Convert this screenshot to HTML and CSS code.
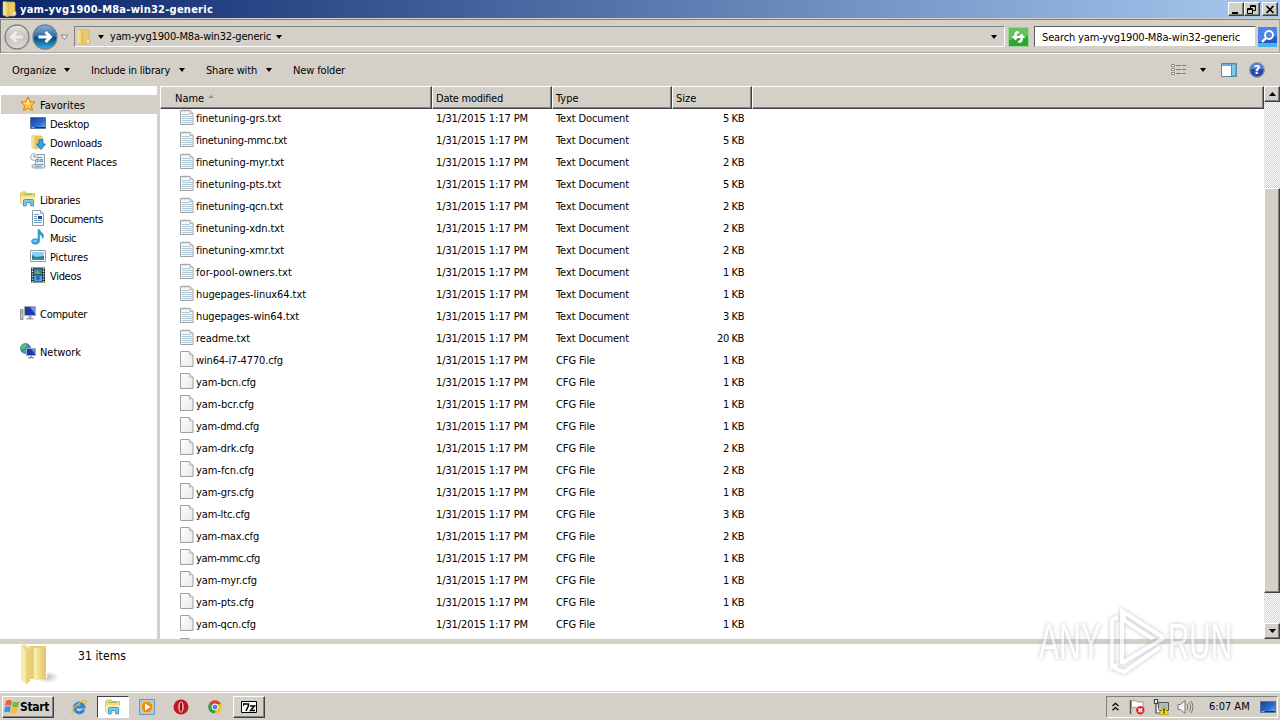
FILE: index.html
```html
<!DOCTYPE html>
<html lang="en">
<head>
    <meta charset="UTF-8">
    <title>yam-yvg1900-M8a-win32-generic</title>
    <link rel="stylesheet" href="styles.css">
</head>
<body>
    <!-- Shared icons -->
    <svg class="defs" width="0" height="0">
        <defs>
            <linearGradient id="gFolder" x1="0" x2="1"><stop offset="0" stop-color="#fbf0b4"/><stop offset="1" stop-color="#dfba50"/></linearGradient>
            <linearGradient id="gPage" x1="0" y1="0" x2="1" y2="1"><stop offset="0" stop-color="#fff"/><stop offset="1" stop-color="#e8e8e8"/></linearGradient>
            <linearGradient id="gScreen" x1="0" y1="0" x2="1" y2="1"><stop offset="0" stop-color="#1c3c9c"/><stop offset=".6" stop-color="#2f6cd0"/><stop offset="1" stop-color="#7fc0f0"/></linearGradient>
            <linearGradient id="gBlue" x1="0" y1="0" x2="0" y2="1"><stop offset="0" stop-color="#8cb4d4"/><stop offset=".48" stop-color="#2e6a9c"/><stop offset=".5" stop-color="#06417c"/><stop offset="1" stop-color="#28b4e8"/></linearGradient>
            <linearGradient id="gGrey" x1="0" y1="0" x2="0" y2="1"><stop offset="0" stop-color="#e8e6e2"/><stop offset=".5" stop-color="#c4c1bc"/><stop offset="1" stop-color="#dedcd8"/></linearGradient>
        </defs>
        <symbol id="folder" viewBox="0 0 16 16">
            <path d="M5 1h8l1 1v8l1 1v3l-2 1H5z" fill="#e8ca68" stroke="#d0ae50" stroke-width=".6"/>
            <path d="M2 1l2-.6L8 2v13l-2 .7L2 14z" fill="url(#gFolder)" stroke="#d8bd60" stroke-width=".6"/>
            <path d="M13 11v3" stroke="#fff" stroke-width="1.2"/>
        </symbol>
        <symbol id="page" viewBox="0 0 14 16">
            <path d="M.5.5h9l3.500 3.500v11.500H.5z" fill="url(#gPage)" stroke="#a0a0a0"/>
            <path d="M9.500.5V4H13" fill="#e4e4e4" stroke="#a8a8a8" stroke-width=".8"/>
        </symbol>
        <symbol id="text" viewBox="0 0 14 16">
            <path d="M.5 1.500h9.500l3 3v11H.5z" fill="#f4f8fa" stroke="#a0a0a0"/>
            <path d="M2 .5v2M4 .5v2M6 .5v2M8 .5v2" stroke="#b0b0b0"/>
            <path d="M10 1.500v3h3" fill="#ddd" stroke="#a8a8a8" stroke-width=".8"/>
            <path d="M2 5.500h8M2 7.500h10M2 9.500h10M2 11.500h10M2 13.500h10" stroke="#afc9d9"/>
        </symbol>
        <symbol id="star" viewBox="0 0 16 16"><path d="M8 .8l2.100 4.800 5.200.5-3.900 3.500 1.100 5.200L8 12.100l-4.500 2.700 1.100-5.200L.7 6.100l5.200-.5z" fill="#ffc83c" stroke="#e07c18"/><path d="M8 3l1.300 3.500L8 9 4 7l2.700-.6z" fill="#ffeb9a"/></symbol>
        <symbol id="desktop" viewBox="0 0 16 16"><path d="M.5 2.500h15v11H.5z" fill="url(#gScreen)" stroke="#55779c"/><path d="M1 12.500h14" stroke="#16336c"/><path d="M1.500 12.500h3" stroke="#6cd080"/></symbol>
        <symbol id="downloads" viewBox="0 0 16 16"><use href="#folder" width="14" height="16"/><path d="M9 5.500h4V10h2.500L11 15.500 6.500 10H9z" fill="#39a0e4" stroke="#1b68b0" stroke-width=".8"/></symbol>
        <symbol id="recent" viewBox="0 0 16 16"><path d="M5.500 1.500h9V12h-9z" fill="#e8f0f6" stroke="#8ba0b0"/><path d="M7 4.500h5M7 6.500h2v2H7zM10.500 6.500h2v2h-2z" fill="none" stroke="#6f93ae"/><circle cx="4" cy="4" r="3.400" fill="#f4f8fa" stroke="#9cacb8"/><path d="M4 2v2h2" fill="none" stroke="#607484" stroke-width=".8"/><path d="M3.500 11.500h10c2 0 2 3.500 0 3.500h-10c-2 0-2-3.500 0-3.500z" fill="#e0e9f0" stroke="#8599a8"/><path d="M4.500 13.300h7" stroke="#6f93ae"/></symbol>
        <symbol id="library" viewBox="0 0 16 16"><path d="M.5 2.500L2 1h4l1 1.500h7.500V13H1z" fill="#f4dc80" stroke="#cfac48" stroke-width=".8"/><path d="M3 3.500h9" stroke="#8cc060"/><path d="M1 6h14v7H1z" fill="#fbedac"/><path d="M3.500 15V9.500q0-1 1-1h8q1 0 1 1V15h-2.700v-3.500H6.200V15z" fill="#79c8ec" stroke="#3c91c8" stroke-width=".9"/></symbol>
        <symbol id="document" viewBox="0 0 16 16"><path d="M2.500.5h8l3 3v12h-11z" fill="#fafcff" stroke="#8899a8"/><path d="M10.500.5v3h3" fill="#dde" stroke="#8899a8" stroke-width=".8"/><path d="M4 4.500h5M4 6.500h3M4 8.500h3M4 10.500h8M4 12.500h8" stroke="#6c9bc4"/><path d="M8 6h4v3H8z" fill="#244c88"/></symbol>
        <symbol id="music" viewBox="0 0 16 16"><path d="M8 .5h1.500c.3 2.500 4 3 4 6.500 0 1-.5 2-1 2.500.2-2.500-1.500-3.500-3-4V12c0 2-1.800 3.300-4 3.300C3 15.300 1.500 14 1.500 12.500S3 9.700 5 9.700c1.200 0 2 .2 3 .8z" fill="#32a0dc" stroke="#207cb8" stroke-width=".5"/><ellipse cx="5" cy="12" rx="2" ry="1.300" fill="#79cdf4"/></symbol>
        <symbol id="picture" viewBox="0 0 16 16"><path d="M.5 2.500h15v11H.5z" fill="#fff" stroke="#8e9ca6"/><path d="M2 4h12v8H2z" fill="#8bd1f0"/><path d="M2 7l4 2 8-1v4H2z" fill="#2c7c80"/><path d="M2 10.500h12V12H2z" fill="#2f94b0"/></symbol>
        <symbol id="video" viewBox="0 0 16 16"><path d="M1 .5h14v15H1z" fill="#26343c"/><path d="M4 1.500h8v6H4z" fill="#397c94"/><path d="M4 8.500h8v6H4z" fill="#49a4dc"/><path d="M5 5l3-2 3 4H5z" fill="#70a468"/><circle cx="8" cy="11" r="2" fill="#2464b4"/><path d="M2.500 1v14M13.500 1v14" stroke="#e4ecf0" stroke-width="1.400" stroke-dasharray="1.300 1.300"/></symbol>
        <symbol id="computer" viewBox="0 0 16 16"><path d="M.5 4.500h2.500v10H.5z" fill="#c4c8c0" stroke="#8c9088"/><path d="M1 7h2" stroke="#5aa84a"/><path d="M4.500 1.500h11v9h-11z" fill="#2138ac" stroke="#a3acb8"/><path d="M10 2l5 0v7z" fill="#6a90e8"/><path d="M8.500 11h3v2h2v1.500h-7V13h2z" fill="#9ca4b0"/></symbol>
        <symbol id="network" viewBox="0 0 16 16"><circle cx="5.500" cy="5.500" r="5" fill="#2f8cd4" stroke="#2465a8" stroke-width=".6"/><path d="M2 2l4-1 1 2-3 3-3 0zM4 7l3 1-1 2z" fill="#5cc45c"/><path d="M6.500 5.500h9v7h-9z" fill="#1c38b0" stroke="#a0acbc"/><path d="M11 6l4 0v5z" fill="#5c88e4"/><path d="M10 13h2v1h2v1.500H8V14h2z" fill="#8c96a6"/></symbol>
    </svg>

    <div class="title-bar">
        <svg class="ico"><use href="#folder"/></svg>
        <span class="title">yam-yvg1900-M8a-win32-generic</span>
        <div class="window-buttons">
            <span class="button"><svg width="10" height="9"><path d="M1 7h6v2H1z"/></svg></span>
            <span class="button"><svg width="10" height="9" fill="none" stroke="#000"><path d="M3.500 3V.5h5v5H6M3 1.500h6M.5 3.500h5v5h-5zM0 4.500h6"/></svg></span>
            <span class="button close"><svg width="10" height="9"><path d="M1.500 1l7 7M8.500 1l-7 7" stroke="#000" stroke-width="1.700"/></svg></span>
        </div>
    </div>

    <div class="address-bar">
        <svg class="nav-buttons" width="70" height="28" viewBox="0 0 70 28">
            <circle cx="17" cy="14" r="12" fill="url(#gGrey)" stroke="#85827e" stroke-width="1.300"/>
            <path d="M23 14H12M16.500 9l-5 5 5 5" fill="none" stroke="#efedea" stroke-width="3"/>
            <circle cx="45" cy="14" r="12" fill="url(#gBlue)" stroke="#6e8296" stroke-width="1.300"/>
            <path d="M38.500 14h11M45.500 9l5 5-5 5" fill="none" stroke="#fff" stroke-width="3"/>
            <path d="M61 12h7l-3.500 4.500z" fill="#eee" stroke="#8d8a83"/>
        </svg>
        <div class="path-box">
            <svg class="ico"><use href="#folder"/></svg>
            <i class="arrow first"></i>
            <span class="t path">yam-yvg1900-M8a-win32-generic</span>
            <i class="arrow"></i>
            <i class="arrow history"></i>
        </div>
        <svg class="refresh" width="21" height="20" viewBox="0 0 21 20">
            <path d="M.5.5h20v19H.5z" fill="#2ea52e" stroke="#a8cfa0"/><path d="M1 1h19v8L1 13z" fill="#63c15c"/>
            <path d="M10 4q-4 0-4 5H3.500l4 4.500 4-4.500H8.500q0-3 3-3zM11 16q4 0 4-5h2.500l-4-4.500-4 4.500h3q0 3-3 3z" fill="#fff"/>
        </svg>
        <div class="search-box"><span class="t search">Search yam-yvg1900-M8a-win32-generic</span></div>
        <svg class="search-button" width="19" height="20" viewBox="0 0 19 20">
            <path d="M0 0h19v20H0z" fill="#2458cc"/><path d="M0 0h19v9L0 15z" fill="#4b83e6"/><path d="M0 16h19v4H0z" fill="#44b4ee"/>
            <circle cx="11" cy="8" r="4" fill="#4c8ae0" stroke="#fff" stroke-width="1.800"/><path d="M8 11l-4 4" stroke="#fff" stroke-width="2.400"/>
        </svg>
    </div>

    <div class="toolbar">
        <span class="t w44">Organize</span><i class="arrow"></i>
        <span class="t w79">Include in library</span><i class="arrow"></i>
        <span class="t w51">Share with</span><i class="arrow"></i>
        <span class="t w52">New folder</span>
        <div class="view-tools">
            <svg width="16" height="14" viewBox="0 0 16 14"><path d="M.5 1.500h3v2h-3zM.5 5.500h3v2h-3zM.5 9.500h3v2h-3z" fill="#fff" stroke="#8b8984"/><path d="M5 2.500h5M11 2.500h4M5 6.500h5M11 6.500h4M5 10.500h5M11 10.500h4" stroke="#6b7c98"/></svg>
            <i class="arrow"></i>
            <svg class="preview" width="16" height="14" viewBox="0 0 16 14"><path d="M.5.5h15v13H.5z" fill="#fff" stroke="#5c8296"/><path d="M1 2h9" stroke="#6faed4" stroke-width="2"/><path d="M10.500 1h4.500v12h-4.500z" fill="#84c8e8" stroke="#4992b8"/></svg>
            <svg width="16" height="16" viewBox="0 0 16 16"><circle cx="8" cy="8" r="7.300" fill="#2448a8" stroke="#8d9bb8" stroke-width="1.300"/><path d="M2 7a6 6 0 0 1 12 0z" fill="#5b7fd0"/><text x="8" y="12.300" class="help">?</text></svg>
        </div>
    </div>

    <div class="content">
        <div class="sidebar">
            <div class="side-item top selected"><svg class="ico"><use href="#star"/></svg><span class="t w45">Favorites</span></div>
            <div class="side-item"><svg class="ico"><use href="#desktop"/></svg><span class="t w39">Desktop</span></div>
            <div class="side-item"><svg class="ico"><use href="#downloads"/></svg><span class="t w52">Downloads</span></div>
            <div class="side-item"><svg class="ico"><use href="#recent"/></svg><span class="t w67">Recent Places</span></div>
            <div class="side-item top group"><svg class="ico"><use href="#library"/></svg><span class="t w40">Libraries</span></div>
            <div class="side-item"><svg class="ico"><use href="#document"/></svg><span class="t w53">Documents</span></div>
            <div class="side-item"><svg class="ico"><use href="#music"/></svg><span class="t w26">Music</span></div>
            <div class="side-item"><svg class="ico"><use href="#picture"/></svg><span class="t w38">Pictures</span></div>
            <div class="side-item"><svg class="ico"><use href="#video"/></svg><span class="t w31">Videos</span></div>
            <div class="side-item top group"><svg class="ico"><use href="#computer"/></svg><span class="t w47">Computer</span></div>
            <div class="side-item top group"><svg class="ico"><use href="#network"/></svg><span class="t w41">Network</span></div>
        </div>

        <div class="list">
            <div class="list-header">
                <div class="col name"><span class="t">Name</span><i class="sort"></i></div>
                <div class="col date"><span class="t w67">Date modified</span></div>
                <div class="col type"><span class="t">Type</span></div>
                <div class="col size"><span class="t">Size</span></div>
                <div class="col rest"></div>
            </div>
            <div class="rows" id="rows"></div>
        </div>

        <div class="scrollbar">
            <span class="button"><svg width="7" height="4"><path d="M0 4h7L3.500 0z"/></svg></span>
            <div class="track"><div class="thumb"></div></div>
            <span class="button"><svg width="7" height="4"><path d="M0 0h7L3.500 4z"/></svg></span>
        </div>
    </div>

    <div class="details">
        <svg width="42" height="44" viewBox="0 0 42 44">
            <defs><radialGradient id="gShade"><stop offset="0" stop-color="#bbb"/><stop offset="1" stop-color="#fff"/></radialGradient></defs>
            <ellipse cx="27" cy="33" rx="12" ry="6" fill="url(#gShade)"/>
            <path d="M9 2h17v26l2 4-2 3H9z" fill="#e7cf78"/>
            <path d="M1 1l4-1 5 4v33l-4 3-5-4z" fill="#f7e9a8"/><path d="M10 5v32l-4 4V6L1 1z" fill="#e9d27c"/>
            <path d="M14 4h12v24l2 4-2 3-12 1z" fill="url(#gFolder)"/><path d="M26.500 26v8" stroke="#fff" stroke-width="1.500"/>
        </svg>
        <span class="t w48">31 items</span>
    </div>

    <div class="taskbar">
        <div class="start">
            <svg width="16" height="16" viewBox="0 0 16 16"><path d="M2 2q3-2 6 0L7 7Q4 5.500 1 7z" fill="#ee6030"/><path d="M9 2.500q3 1.500 6.500 0L14 8q-3 1.300-6-.5z" fill="#78b840"/><path d="M1 8q3-1.500 6 0l-1.500 5.500q-3-1.500-5.500 0z" fill="#4090dc"/><path d="M8 8.500q3 1.500 6 .3L12.500 14q-3 1.500-6 0z" fill="#f6bc30"/></svg>
            <span class="t w29">Start</span>
        </div>
        <div class="task"><svg width="16" height="16" viewBox="0 0 16 16"><path d="M12.800 10.500A4.800 4.800 0 1 1 13 8H5" fill="none" stroke="#2a86d0" stroke-width="3"/><path d="M1.500 15Q-1 12 6 6t9-4.500q1 1.500-1.500 4" fill="none" stroke="#e8b830" stroke-width="1.300"/></svg></div>
        <div class="task active"><svg class="ico"><use href="#library"/></svg></div>
        <div class="task"><svg width="16" height="16" viewBox="0 0 16 16"><path d="M.5.5h15v15H.5z" fill="#a4cce8" stroke="#609cc8"/><circle cx="8" cy="8" r="6" fill="#f58a10" stroke="#fbcd80"/><path d="M6 4.500l5.500 3.500L6 11.500z" fill="#fff"/></svg></div>
        <div class="task"><svg width="16" height="16" viewBox="0 0 16 16"><circle cx="8" cy="8" r="7.500" fill="#c01820"/><ellipse cx="8" cy="8" rx="2.700" ry="5.500" fill="#ecd0c8"/><ellipse cx="8" cy="8" rx="1.300" ry="4.800" fill="#901018"/></svg></div>
        <div class="task"><svg width="14" height="14" viewBox="0 0 14 14"><circle cx="7" cy="7" r="6.600" fill="#f2c22c"/><path d="M7 7L1 3.800A6.700 6.700 0 0 1 13 4.200H7z" fill="#dc4437"/><path d="M1 3.800A6.700 6.700 0 0 0 6.500 13.600L9 8z" fill="#30a055"/><circle cx="7" cy="7" r="3" fill="#4684e8" stroke="#fff"/></svg></div>
        <div class="task raised"><svg width="16" height="12" viewBox="0 0 16 12"><path d="M.5.5h15v11H.5z" fill="#fff" stroke="#000"/><path d="M2 3h5.500v1.500L5 10M9 5h4.500L9.500 9.500H14" fill="none" stroke="#000" stroke-width="1.500"/><path d="M2.500 3v2" stroke="#000"/></svg></div>
        <div class="tray">
            <svg class="chevrons" width="7" height="9"><path d="M.5 4L3.500 1.300 6.500 4M.5 8.200l3-2.700 3 2.700" fill="none" stroke="#000" stroke-width="1.300"/></svg>
            <svg width="16" height="16" viewBox="0 0 16 16"><path d="M1.500 1v14" stroke="#555" stroke-width="1.400"/><path d="M2.500 2q3-1 5.500.5t6 0V9q-3 1.500-5.500 0t-6 0z" fill="#fff" stroke="#888" stroke-width=".8"/><circle cx="11.300" cy="11.300" r="4.200" fill="#dc3040"/><path d="M9.500 9.500l3.600 3.600M13.100 9.500l-3.600 3.600" stroke="#fff" stroke-width="1.400"/></svg>
            <svg width="16" height="16" viewBox="0 0 16 16"><path d="M5.500 3.500h10v8h-10z" fill="#aebccc" stroke="#555"/><path d="M1.500.5h3v4h-3zM3 4.500V14h4" fill="#fff" stroke="#444" stroke-width="1.200"/><path d="M11 6.500l4.800 9H6.200z" fill="#f8d820" stroke="#b89a10" stroke-width=".7"/><path d="M11 9.500v3M11 13.300v1.200" stroke="#000" stroke-width="1.200"/></svg>
            <svg width="17" height="16" viewBox="0 0 17 16"><path d="M1 5.500h2.500L8 1.500v13l-4.500-4H1z" fill="#f4f4f4" stroke="#777"/><path d="M10 5q2 3 0 6M12 3.500q3.500 4.500 0 9M14 2q4 6 0 12" fill="none" stroke="#777"/></svg>
            <span class="t clock">6:07 AM</span>
            <svg class="ico show-desktop"><use href="#desktop"/></svg>
        </div>
    </div>

    <svg class="watermark" width="216" height="78" viewBox="0 0 216 78">
        <text x="9" y="55" textLength="62" lengthAdjust="spacingAndGlyphs">ANY</text>
        <text x="138" y="55" textLength="64" lengthAdjust="spacingAndGlyphs">RUN</text>
        <path d="M92 60V7l42 27M92 7l3 10 28 18M134 34L92 59M88 13l-6 3v47l6-3M84 64l10 4 36-25"/>
    </svg>

    <script>
        var files = [
            ["finetuning-grs.txt", 5, 85], ["finetuning-mmc.txt", 5, 91], ["finetuning-myr.txt", 2, 88],
            ["finetuning-pts.txt", 5, 85], ["finetuning-qcn.txt", 2, 87], ["finetuning-xdn.txt", 2, 88],
            ["finetuning-xmr.txt", 2, 88], ["for-pool-owners.txt", 1, 96], ["hugepages-linux64.txt", 1, 110],
            ["hugepages-win64.txt", 3, 103], ["readme.txt", 20, 54], ["win64-i7-4770.cfg", 1, 87],
            ["yam-bcn.cfg", 1, 60], ["yam-bcr.cfg", 1, 58], ["yam-dmd.cfg", 1, 63], ["yam-drk.cfg", 2, 58],
            ["yam-fcn.cfg", 2, 58], ["yam-grs.cfg", 1, 58], ["yam-ltc.cfg", 3, 54], ["yam-max.cfg", 2, 63],
            ["yam-mmc.cfg", 1, 64], ["yam-myr.cfg", 1, 61], ["yam-pts.cfg", 1, 58], ["yam-qcn.cfg", 1, 60]
        ];
        var html = "";

        for (var i = 0; i < files.length; i++) {
            var isText = files[i][0].indexOf(".txt") > 0;
            html += '<div class="row">' +
                '<svg class="file-ico"><use href="#' + (isText ? "text" : "page") + '"/></svg>' +
                '<span class="cell-name"><span class="t" data-width="' + files[i][2] + '">' + files[i][0] + '</span></span>' +
                '<span class="cell-date"><span class="t" data-width="92">1/31/2015 1:17 PM</span></span>' +
                '<span class="cell-type"><span class="t" data-width="' + (isText ? 73 : 39) + '">' + (isText ? "Text Document" : "CFG File") + '</span></span>' +
                '<span class="cell-size"><span class="t" data-width="' + (files[i][1] > 9 ? 27 : 21) + '">' + files[i][1] + ' KB</span></span>' +
                '</div>';
        }
        // Next row only peeks in at the bottom edge
        html += '<div class="row"><svg class="file-ico"><use href="#page"/></svg></div>';
        document.getElementById("rows").innerHTML = html;

        function fit(el, width) {
            var gap = (width - el.getBoundingClientRect().width) / el.textContent.length;
            el.style.letterSpacing = gap + "px";
        }
        var labels = document.querySelectorAll(".t");
        for (var j = 0; j < labels.length; j++) {
            var m = labels[j].className.match(/w(\d+)/);
            if (labels[j].dataset.width) fit(labels[j], +labels[j].dataset.width);
            else if (m) fit(labels[j], +m[1]);
        }
        fit(document.querySelector(".title"), 193);
        fit(document.querySelector(".path"), 161);
        fit(document.querySelector(".search"), 198);
    </script>
</body>
</html>
```
FILE: styles.css
```css
* {
    box-sizing: border-box;
}

body {
    margin: 0;
    width: 1280px;
    height: 720px;
    overflow: hidden;
    display: flex;
    flex-direction: column;
    background: #d4d0c8;
    color: #000;
    font: 11px/14px "DejaVu Sans Condensed", "DejaVu Sans", sans-serif;
    font-stretch: condensed;
    white-space: nowrap;
}

svg {
    display: block;
    flex: none;
}

.defs {
    position: absolute;
}

.t {
    display: inline-block;
    padding-top: 1px;
}

.ico {
    width: 16px;
    height: 16px;
}

.arrow {
    width: 0;
    border: 3.5px solid transparent;
    border-top: 4px solid #000;
    border-bottom: 0;
    flex: none;
}

.button {
    width: 16px;
    height: 14px;
    display: flex;
    align-items: center;
    justify-content: center;
    background: #d4d0c8;
    border: 1px solid;
    border-color: #fff #404040 #404040 #fff;
    box-shadow: inset -1px -1px #808080;
}

/* Title bar */
.title-bar {
    height: 18px;
    flex: none;
    display: flex;
    align-items: center;
    padding: 0 2px 0 1px;
    background: linear-gradient(to right, #0a246a, #a6caf0);
    color: #fff;
}

.title {
    margin-left: 3px;
    padding-top: 1px;
    font-weight: bold;
}

.window-buttons {
    display: flex;
    margin-left: auto;
}

.close {
    margin-left: 2px;
}

/* Address bar */
.address-bar {
    height: 36px;
    flex: none;
    display: flex;
    align-items: center;
    padding-top: 1px;
    border-top: 1px solid #d4d0c8;
    border-bottom: 1px solid #fff;
    box-shadow: inset 0 1px #808080, inset 1px 0 #808080, inset -1px -1px #a5a29c;
}

.path-box {
    width: 931px;
    height: 21px;
    margin-left: 4px;
    display: flex;
    align-items: center;
    border: 1px solid;
    border-color: #808080 #fff #fff #808080;
}

.path-box .first {
    margin: 0 5px 0 7px;
}

.path-box .path {
    margin-left: 1px;
    padding-top: 0;
}

.path-box .path + .arrow {
    margin-left: 5px;
}

.path-box .history {
    margin: 0 7px 0 auto;
}

.refresh {
    margin-left: 3px;
}

.search-box {
    width: 222px;
    height: 21px;
    margin: 0 2px 0 5px;
    padding: 3px 0 0 7px;
    background: #fff;
    border: 1px solid;
    border-color: #606060 #d4d0c8 #d4d0c8 #606060;
}

/* Toolbar */
.toolbar {
    height: 32px;
    flex: none;
    display: flex;
    align-items: center;
    padding-left: 12px;
}

.toolbar > .arrow {
    margin: 0 21px 0 8px;
}

.toolbar > .w79 + .arrow {
    margin-left: 9px;
}

.toolbar > .w51 + .arrow {
    margin-left: 9px;
}

.view-tools {
    display: flex;
    align-items: center;
    margin-left: auto;
    padding-right: 15px;
}

.view-tools .arrow {
    margin: 0 15px 0 13px;
}

.preview {
    margin-right: 12px;
}

.help {
    fill: #fff;
    font: bold 12px "DejaVu Sans", sans-serif;
    text-anchor: middle;
}

/* Folder tree */
.content {
    height: 553px;
    flex: none;
    display: flex;
}

.sidebar {
    width: 157px;
    padding-top: 9px;
    background: #fff;
}

.side-item {
    height: 19px;
    display: flex;
    align-items: center;
    gap: 4px;
    padding-left: 30px;
}

.side-item .ico {
    margin-top: -1px;
}

.side-item .t,
.col .t {
    padding-top: 2px;
}

.side-item.top {
    padding-left: 20px;
}

.side-item.group {
    margin-top: 19px;
}

.selected {
    margin-left: 1px;
    background: #d4d0c8;
}

.side-item.selected {
    padding-left: 19px;
}

/* File list */
.list {
    width: 1104px;
    margin-left: 3px;
    display: flex;
    flex-direction: column;
    background: #fff;
}

.list-header {
    height: 23px;
    flex: none;
    display: flex;
}

.col {
    display: flex;
    align-items: center;
    padding-left: 3px;
    background: #d4d0c8;
    border: 1px solid;
    border-color: #fff #404040 #404040 #fff;
    box-shadow: inset -1px -1px #808080;
}

.col.name {
    width: 272px;
    padding-left: 14px;
}

.col.date,
.col.type {
    width: 120px;
}

.col.size {
    width: 80px;
}

.col.rest {
    flex: 1;
}

.sort {
    margin: 0 0 3px 4px;
    border: 3px solid transparent;
    border-top: 0;
    border-bottom: 3px solid #96928c;
}

.rows {
    flex: 1;
    overflow: hidden;
    display: flex;
    flex-direction: column;
}

.row {
    height: 22px;
    flex: none;
    display: flex;
    align-items: center;
    padding-left: 20px;
}

.row:first-child {
    margin-top: -2px;
}

.file-ico {
    width: 14px;
    height: 16px;
    margin-top: -2px;
}

.row:last-child .file-ico {
    margin-top: 0;
}

.cell-name {
    width: 240px;
    padding-left: 2px;
}

.cell-date {
    width: 120px;
    padding-left: 2px;
}

.cell-type {
    width: 120px;
    padding-left: 2px;
}

.cell-size {
    width: 70px;
    text-align: right;
}

/* Scrollbar */
.scrollbar {
    width: 16px;
    display: flex;
    flex-direction: column;
}

.scrollbar .button {
    height: 16px;
}

.track {
    flex: 1;
    padding-top: 86px;
    background: repeating-conic-gradient(#d4d0c8 0 25%, #fff 0 50%) 0 0 / 2px 2px;
}

.thumb {
    height: 405px;
    background: #d4d0c8;
    border: 1px solid;
    border-color: #fff #404040 #404040 #fff;
    box-shadow: inset -1px -1px #808080;
}

/* Details pane */
.details {
    height: 53px;
    flex: none;
    display: flex;
    gap: 16px;
    padding: 0 0 0 20px;
    background: #fff;
    border-top: 5px solid #d4d0c8;
    border-bottom: 1px solid #d4d0c8;
}

.details .t {
    margin-top: 4px;
    font-size: 12px;
}

/* Taskbar */
.taskbar {
    flex: 1;
    display: flex;
    align-items: center;
    padding: 0 2px;
    border-top: 1px solid #fff;
}

.start {
    width: 52px;
    height: 22px;
    display: flex;
    align-items: center;
    padding-left: 1px;
    font-size: 12px;
    font-weight: bold;
    border: 1px solid;
    border-color: #fff #404040 #404040 #fff;
    box-shadow: inset -1px -1px #808080;
    margin-right: 9px;
}

.task {
    width: 32px;
    height: 22px;
    margin-right: 2px;
    display: flex;
    align-items: center;
    justify-content: center;
    border: 1px solid transparent;
}

.task.active {
    background: #fff;
    border-color: #404040 #fff #fff #404040;
}

.task.raised {
    border-color: #fff #404040 #404040 #fff;
    box-shadow: inset -1px -1px #808080;
}

.tray {
    width: 172px;
    height: 22px;
    margin-left: auto;
    display: flex;
    align-items: center;
    gap: 8px;
    padding-left: 5px;
    border: 1px solid;
    border-color: #808080 #fff #fff #808080;
}

.chevrons {
    margin-right: 2px;
}

.clock {
    margin-left: 7px;
}

.show-desktop {
    margin-left: 2px;
}

/* Watermark */
.watermark {
    position: absolute;
    left: 1030px;
    top: 604px;
    opacity: .6;
    filter: drop-shadow(0 0 2px #999);
}

.watermark text {
    font: 50px "Liberation Sans", sans-serif;
    fill: #fff;
}

.watermark path {
    fill: none;
    stroke: #fff;
    stroke-width: 4;
}
```
